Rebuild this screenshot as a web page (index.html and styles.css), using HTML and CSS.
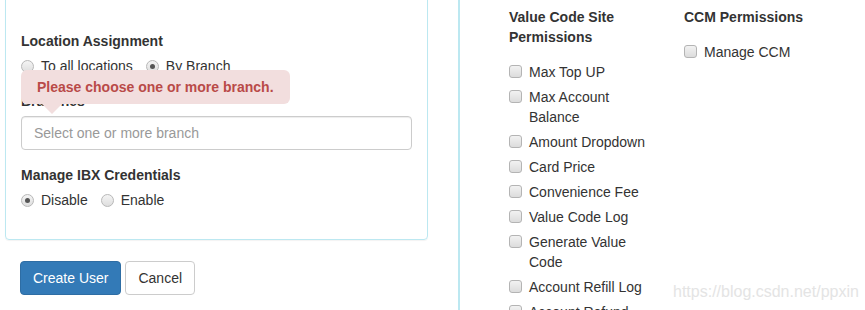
FILE: index.html
```html
<!DOCTYPE html>
<html lang="en">
<head>
    <meta charset="UTF-8">
    <title>Create User</title>
    <link rel="stylesheet" href="styles.css">
</head>
<body>
    <div class="page">
        <div class="left-col">
            <div class="panel">
                <div class="form-group">
                    <label class="control-label">Location Assignment</label>
                    <div class="radio-row">
                        <label class="radio-inline"><input type="radio" name="loc"> To all locations</label>
                        <label class="radio-inline"><input type="radio" name="loc" checked> By Branch</label>
                    </div>
                </div>
                <div class="form-group branch-group">
                    <label class="control-label">Branches</label>
                    <input class="form-control" type="text" placeholder="Select one or more branch">
                    <div class="error-tip">Please choose one or more branch.</div>
                </div>
                <div class="form-group">
                    <label class="control-label">Manage IBX Credentials</label>
                    <div class="radio-row ibx-row">
                        <label class="radio-inline"><input type="radio" name="ibx" checked> Disable</label>
                        <label class="radio-inline"><input type="radio" name="ibx"> Enable</label>
                    </div>
                </div>
            </div>

            <div class="actions">
                <button class="btn btn-primary">Create User</button>
                <button class="btn btn-default">Cancel</button>
            </div>
        </div>

        <div class="right-col">
            <div class="perm-col">
                <label class="control-label">Value Code Site Permissions</label>
                <label class="checkbox"><input type="checkbox"> <span>Max Top UP</span></label>
                <label class="checkbox"><input type="checkbox"> <span>Max Account Balance</span></label>
                <label class="checkbox"><input type="checkbox"> <span>Amount Dropdown</span></label>
                <label class="checkbox"><input type="checkbox"> <span>Card Price</span></label>
                <label class="checkbox"><input type="checkbox"> <span>Convenience Fee</span></label>
                <label class="checkbox"><input type="checkbox"> <span>Value Code Log</span></label>
                <label class="checkbox"><input type="checkbox"> <span>Generate Value Code</span></label>
                <label class="checkbox"><input type="checkbox"> <span>Account Refill Log</span></label>
                <label class="checkbox"><input type="checkbox"> <span>Account Refund</span></label>
            </div>
            <div class="perm-col">
                <label class="control-label">CCM Permissions</label>
                <label class="checkbox"><input type="checkbox"> <span>Manage CCM</span></label>
            </div>
        </div>
    </div>

    <div class="watermark">https://blog.csdn.net/ppxin</div>
</body>
</html>
```

FILE: styles.css
```css
body {
    margin: 0;
    font-family: 'Liberation Sans', Arial, Helvetica, sans-serif;
    font-size: 14px;
    line-height: 20px;
    color: #333;
    background-color: #fff;
    overflow: hidden;
}
.page {
    display: flex;
    height: 310px;
    overflow: hidden;
}

/* --- left side --- */
.left-col {
    width: 423px;
    padding-left: 5px;
    padding-right: 30px;
    flex: none;
}
.panel {
    margin-top: -12px;
    padding: 42px 15px 29px;
    border: 1px solid #bce8f1;
    border-radius: 4px;
    box-shadow: 0 1px 1px rgba(0, 0, 0, 0.05);
}
.form-group {
    margin-bottom: 15px;
}
.form-group:last-child {
    margin-bottom: 0;
}
.control-label {
    display: block;
    margin-bottom: 5px;
    font-weight: bold;
}
.radio-row {
    display: flex;
    gap: 13px;
    height: 20px;
    align-items: center;
}
.ibx-row {
    margin-top: 4px;
}
.radio-inline {
    display: flex;
    align-items: center;
    gap: 7px;
}
.radio-inline input {
    appearance: none;
    margin: 0;
    width: 13px;
    height: 13px;
    border: 1px solid #b8b8b8;
    border-radius: 50%;
    background: linear-gradient(#f4f4f4, #dedede);
    display: grid;
    place-items: center;
}
.radio-inline input:checked::after {
    content: "";
    width: 5px;
    height: 5px;
    border-radius: 50%;
    background-color: #555;
}
.branch-group {
    position: relative;
}
.form-control {
    display: block;
    box-sizing: border-box;
    width: 100%;
    height: 34px;
    padding: 6px 12px;
    font: inherit;
    color: #555;
    border: 1px solid #ccc;
    border-radius: 4px;
    box-shadow: inset 0 1px 1px rgba(0, 0, 0, 0.075);
}
.form-control::placeholder {
    color: #999;
}
.error-tip {
    position: absolute;
    left: 0;
    top: -21px;
    white-space: nowrap;
    padding: 7px 16px;
    font-weight: bold;
    color: #b94a48;
    background-color: #f2dede;
    border-radius: 6px;
}
.error-tip::after {
    content: "";
    position: absolute;
    left: 21px;
    bottom: -10px;
    border-left: 10px solid transparent;
    border-right: 10px solid transparent;
    border-top: 10px solid #f2dede;
}
.actions {
    margin-top: 21px;
    padding-left: 15px;
    display: flex;
    gap: 4px;
}
.btn {
    height: 34px;
    padding: 6px 12px;
    font: inherit;
    border-radius: 4px;
    border: 1px solid transparent;
    cursor: pointer;
}
.btn-primary {
    color: #fff;
    background-color: #337ab7;
    border-color: #2e6da4;
}
.btn-default {
    color: #333;
    background-color: #fff;
    border-color: #ccc;
}

/* --- permissions --- */
.right-col {
    border-left: 2px solid #bce8f1;
    padding: 7px 0 0 49px;
    display: grid;
    grid-template-columns: 175px 175px;
    align-content: start;
}
.perm-col {
    display: flex;
    flex-direction: column;
    padding-right: 30px;
}
.checkbox {
    display: flex;
    gap: 7px;
    margin-top: 10px;
    margin-bottom: 10px;
    cursor: pointer;
}
.checkbox + .checkbox {
    margin-top: -5px;
}
.checkbox input {
    appearance: none;
    flex: none;
    margin: 3px 0 0;
    width: 13px;
    height: 13px;
    border: 1px solid #b4b4b4;
    border-radius: 3px;
    background: linear-gradient(#f2f2f2, #dcdcdc);
}

.watermark {
    position: absolute;
    left: 673px;
    top: 282px;
    font-size: 16px;
    color: #e4e4e4;
    text-shadow: 0 0 1px #fff;
}
```
